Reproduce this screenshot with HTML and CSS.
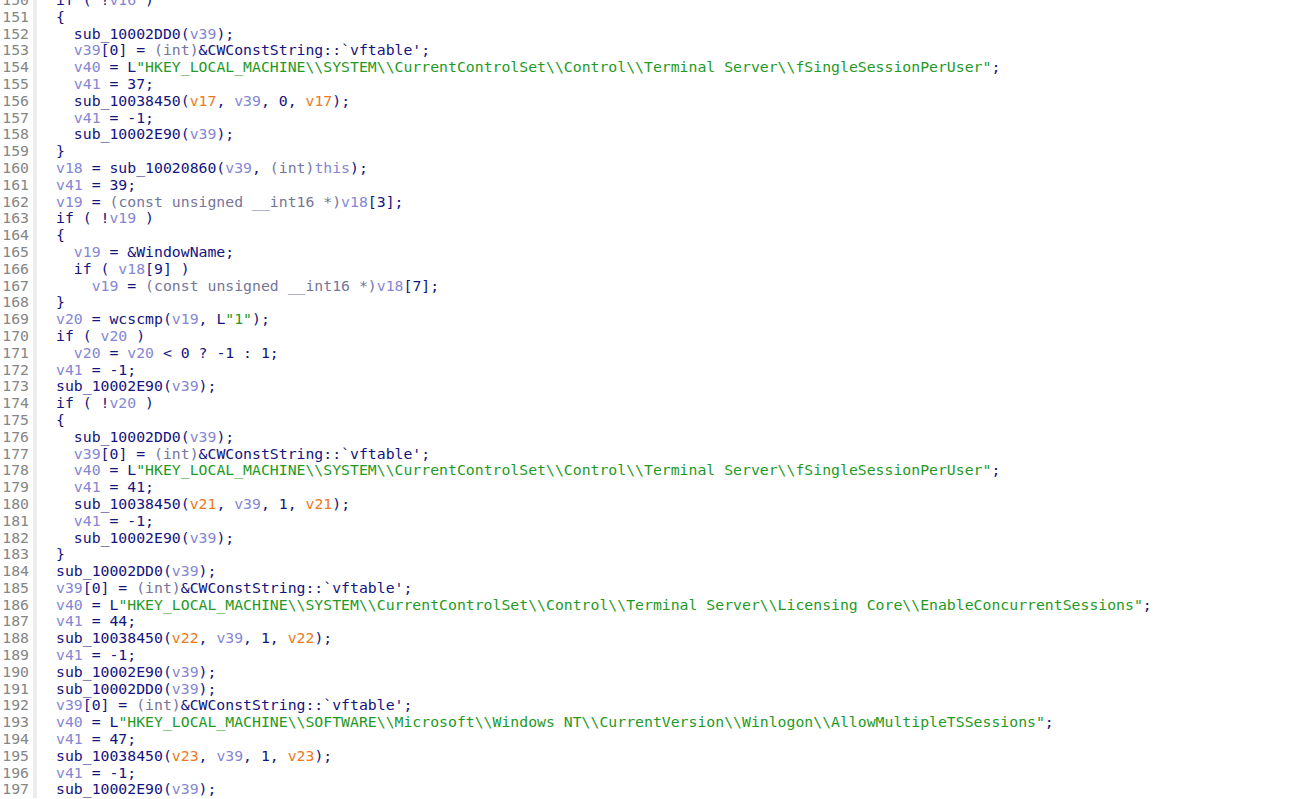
FILE: index.html
```html
<!DOCTYPE html>
<html>
<head>
<meta charset="utf-8">
<link rel="stylesheet" href="styles.css">
</head>
<body>
<div class="view">
<div class="row"><span class="ln">150</span><span class="code">if ( !<span class="v">v16</span> )</span></div>
<div class="row"><span class="ln">151</span><span class="code">{</span></div>
<div class="row"><span class="ln">152</span><span class="code">  sub_10002DD0(<span class="v">v39</span>);</span></div>
<div class="row"><span class="ln">153</span><span class="code">  <span class="v">v39</span>[0] = <span class="t">(int)</span>&amp;CWConstString::`vftable';</span></div>
<div class="row"><span class="ln">154</span><span class="code">  <span class="v">v40</span> = L<span class="s">"HKEY_LOCAL_MACHINE\\SYSTEM\\CurrentControlSet\\Control\\Terminal Server\\fSingleSessionPerUser"</span>;</span></div>
<div class="row"><span class="ln">155</span><span class="code">  <span class="v">v41</span> = 37;</span></div>
<div class="row"><span class="ln">156</span><span class="code">  sub_10038450(<span class="o">v17</span>, <span class="v">v39</span>, 0, <span class="o">v17</span>);</span></div>
<div class="row"><span class="ln">157</span><span class="code">  <span class="v">v41</span> = -1;</span></div>
<div class="row"><span class="ln">158</span><span class="code">  sub_10002E90(<span class="v">v39</span>);</span></div>
<div class="row"><span class="ln">159</span><span class="code">}</span></div>
<div class="row"><span class="ln">160</span><span class="code"><span class="v">v18</span> = sub_10020860(<span class="v">v39</span>, <span class="t">(int)</span><span class="v">this</span>);</span></div>
<div class="row"><span class="ln">161</span><span class="code"><span class="v">v41</span> = 39;</span></div>
<div class="row"><span class="ln">162</span><span class="code"><span class="v">v19</span> = <span class="t">(const unsigned __int16 *)</span><span class="v">v18</span>[3];</span></div>
<div class="row"><span class="ln">163</span><span class="code">if ( !<span class="v">v19</span> )</span></div>
<div class="row"><span class="ln">164</span><span class="code">{</span></div>
<div class="row"><span class="ln">165</span><span class="code">  <span class="v">v19</span> = &amp;WindowName;</span></div>
<div class="row"><span class="ln">166</span><span class="code">  if ( <span class="v">v18</span>[9] )</span></div>
<div class="row"><span class="ln">167</span><span class="code">    <span class="v">v19</span> = <span class="t">(const unsigned __int16 *)</span><span class="v">v18</span>[7];</span></div>
<div class="row"><span class="ln">168</span><span class="code">}</span></div>
<div class="row"><span class="ln">169</span><span class="code"><span class="v">v20</span> = wcscmp(<span class="v">v19</span>, L<span class="s">"1"</span>);</span></div>
<div class="row"><span class="ln">170</span><span class="code">if ( <span class="v">v20</span> )</span></div>
<div class="row"><span class="ln">171</span><span class="code">  <span class="v">v20</span> = <span class="v">v20</span> &lt; 0 ? -1 : 1;</span></div>
<div class="row"><span class="ln">172</span><span class="code"><span class="v">v41</span> = -1;</span></div>
<div class="row"><span class="ln">173</span><span class="code">sub_10002E90(<span class="v">v39</span>);</span></div>
<div class="row"><span class="ln">174</span><span class="code">if ( !<span class="v">v20</span> )</span></div>
<div class="row"><span class="ln">175</span><span class="code">{</span></div>
<div class="row"><span class="ln">176</span><span class="code">  sub_10002DD0(<span class="v">v39</span>);</span></div>
<div class="row"><span class="ln">177</span><span class="code">  <span class="v">v39</span>[0] = <span class="t">(int)</span>&amp;CWConstString::`vftable';</span></div>
<div class="row"><span class="ln">178</span><span class="code">  <span class="v">v40</span> = L<span class="s">"HKEY_LOCAL_MACHINE\\SYSTEM\\CurrentControlSet\\Control\\Terminal Server\\fSingleSessionPerUser"</span>;</span></div>
<div class="row"><span class="ln">179</span><span class="code">  <span class="v">v41</span> = 41;</span></div>
<div class="row"><span class="ln">180</span><span class="code">  sub_10038450(<span class="o">v21</span>, <span class="v">v39</span>, 1, <span class="o">v21</span>);</span></div>
<div class="row"><span class="ln">181</span><span class="code">  <span class="v">v41</span> = -1;</span></div>
<div class="row"><span class="ln">182</span><span class="code">  sub_10002E90(<span class="v">v39</span>);</span></div>
<div class="row"><span class="ln">183</span><span class="code">}</span></div>
<div class="row"><span class="ln">184</span><span class="code">sub_10002DD0(<span class="v">v39</span>);</span></div>
<div class="row"><span class="ln">185</span><span class="code"><span class="v">v39</span>[0] = <span class="t">(int)</span>&amp;CWConstString::`vftable';</span></div>
<div class="row"><span class="ln">186</span><span class="code"><span class="v">v40</span> = L<span class="s">"HKEY_LOCAL_MACHINE\\SYSTEM\\CurrentControlSet\\Control\\Terminal Server\\Licensing Core\\EnableConcurrentSessions"</span>;</span></div>
<div class="row"><span class="ln">187</span><span class="code"><span class="v">v41</span> = 44;</span></div>
<div class="row"><span class="ln">188</span><span class="code">sub_10038450(<span class="o">v22</span>, <span class="v">v39</span>, 1, <span class="o">v22</span>);</span></div>
<div class="row"><span class="ln">189</span><span class="code"><span class="v">v41</span> = -1;</span></div>
<div class="row"><span class="ln">190</span><span class="code">sub_10002E90(<span class="v">v39</span>);</span></div>
<div class="row"><span class="ln">191</span><span class="code">sub_10002DD0(<span class="v">v39</span>);</span></div>
<div class="row"><span class="ln">192</span><span class="code"><span class="v">v39</span>[0] = <span class="t">(int)</span>&amp;CWConstString::`vftable';</span></div>
<div class="row"><span class="ln">193</span><span class="code"><span class="v">v40</span> = L<span class="s">"HKEY_LOCAL_MACHINE\\SOFTWARE\\Microsoft\\Windows NT\\CurrentVersion\\Winlogon\\AllowMultipleTSSessions"</span>;</span></div>
<div class="row"><span class="ln">194</span><span class="code"><span class="v">v41</span> = 47;</span></div>
<div class="row"><span class="ln">195</span><span class="code">sub_10038450(<span class="o">v23</span>, <span class="v">v39</span>, 1, <span class="o">v23</span>);</span></div>
<div class="row"><span class="ln">196</span><span class="code"><span class="v">v41</span> = -1;</span></div>
<div class="row"><span class="ln">197</span><span class="code">sub_10002E90(<span class="v">v39</span>);</span></div>
</div>
</body>
</html>
```

FILE: styles.css
```css
html, body {
  margin: 0;
  padding: 0;
  background: #ffffff;
  overflow: hidden;
}

.view {
  margin-top: -8px;
  font-family: "DejaVu Sans Mono", "Liberation Mono", monospace;
  font-size: 14.8px;
  line-height: 16.8px;
  color: #14147e;
}

.row {
  display: flex;
  height: 16.8px;
}

.ln {
  flex: 0 0 auto;
  width: 29px;
  padding-right: 4px;
  border-right: 4px solid #ececec;
  text-align: right;
  color: #858585;
  white-space: pre;
}

.code {
  padding-left: 19px;
  white-space: pre;
}

.v { color: #8686d4; }
.t { color: #76769a; }
.s { color: #1f9a26; }
.o { color: #ec7a1e; }
```
